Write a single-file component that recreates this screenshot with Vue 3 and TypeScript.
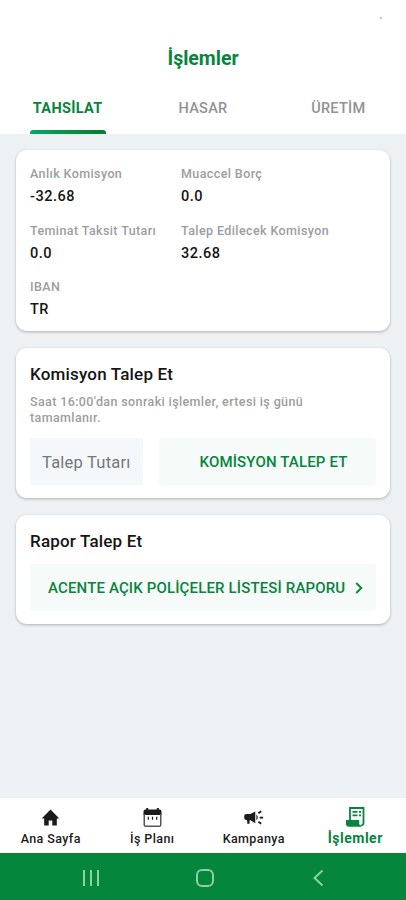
<script setup lang="ts">
import { ref } from 'vue'

interface Field {
  label: string
  value: string
}

const tabs: string[] = ['TAHSİLAT', 'HASAR', 'ÜRETİM']
const activeTab = ref<string>('TAHSİLAT')

const fields: Field[] = [
  { label: 'Anlık Komisyon', value: '-32.68' },
  { label: 'Muaccel Borç', value: '0.0' },
  { label: 'Teminat Taksit Tutarı', value: '0.0' },
  { label: 'Talep Edilecek Komisyon', value: '32.68' },
  { label: 'IBAN', value: 'TR' },
]
</script>

<template>
  <div class="screen">
    <header class="header">
      <span class="speck"></span>
      <h1 class="title">İşlemler</h1>
      <nav class="tabs">
        <button
          v-for="tab in tabs"
          :key="tab"
          class="tab"
          :class="{ active: tab === activeTab }"
          @click="activeTab = tab"
        >
          {{ tab }}
        </button>
      </nav>
    </header>

    <main class="content">
      <section class="card summary">
        <div v-for="field in fields" :key="field.label" class="field">
          <span class="label">{{ field.label }}</span>
          <span class="value">{{ field.value }}</span>
        </div>
      </section>

      <section class="card request">
        <h2 class="heading">Komisyon Talep Et</h2>
        <p class="note">Saat 16:00'dan sonraki işlemler, ertesi iş günü tamamlanır.</p>
        <div class="row">
          <div class="amount">Talep Tutarı</div>
          <button class="action">KOMİSYON TALEP ET</button>
        </div>
      </section>

      <section class="card report">
        <h2 class="heading">Rapor Talep Et</h2>
        <button class="action wide">
          <span>ACENTE AÇIK POLİÇELER LİSTESİ RAPORU</span>
          <svg class="chevron" viewBox="0 0 8 12"><path d="M1.3 1l5 5-5 5" /></svg>
        </button>
      </section>
    </main>

    <nav class="bottom">
      <a class="item">
        <svg class="icon" viewBox="0 0 21 21"><path d="M8.700 18.500v-5h3.600v5h4.500v-7h2.500L10.500 2.500 1.700 11.500h2.500v7z" /></svg>
        <span>Ana Sayfa</span>
      </a>
      <a class="item">
        <svg class="icon" viewBox="0 0 21 21">
          <path d="M1.500 8V4.500a2 2 0 0 1 2-2h.7V1h2v1.500h8.600V1h2v1.500h.7a2 2 0 0 1 2 2V8z" />
          <path class="frame" d="M2.250 7v10.700c0 1 .6 1.600 1.600 1.600h13.300c1 0 1.600-.6 1.600-1.600V7" />
          <path d="M5.700 9.700h1.200v3H5.700zm4.200 0h1.200v3H9.900zm4.200 0h1.200v3h-1.200z" />
        </svg>
        <span>İş Planı</span>
      </a>
      <a class="item">
        <svg class="icon" viewBox="0 0 24 24">
          <path d="M19 11v2h4v-2h-4zm-2 6.610l3.200 2.390 1.200-1.600-3.200-2.400zM21.400 5.600L20.200 4 17 6.400 18.200 8zM4 8c-1.400 0-2.600 1-2.600 2.300v2.400C1.400 14 2.500 15 4 15h.8v4h2.700v-4H8.500l5.500 3.500V5L8.500 8H4zm11.300 4c0 1.330 0 2.700 0 3.350.92-.81 1.500-2.010 1.500-3.340s-.58-2.530-1.500-3.350z" />
        </svg>
        <span>Kampanya</span>
      </a>
      <a class="item current">
        <svg class="icon" viewBox="0 0 21 21">
          <path class="outline" d="M5 14V2h13.500v15a2.300 2.300 0 0 1-2.300 2.300" />
          <path d="M1 14h13.200v3.500c0 1.300.8 2 2.300 2v1.300H4c-1.900 0-3-1.200-3-3z" />
          <path d="M7.500 5h5v1.700h-5zm6.500 0h2v1.700h-2zM7.500 8.500h5v1.700h-5zm6.500 0h2v1.700h-2z" />
        </svg>
        <span>İşlemler</span>
      </a>
    </nav>

    <footer class="system">
      <svg class="key" viewBox="0 0 20 20"><path d="M3 2v16M10 2v16M17 2v16" /></svg>
      <svg class="key" viewBox="0 0 20 20"><rect x="2" y="2" width="16" height="16" rx="5" /></svg>
      <svg class="key" viewBox="0 0 20 20"><path d="M13.500 2.500L5.500 10l8 7.500" /></svg>
    </footer>
  </div>
</template>

<style>
body {
  margin: 0;
}
</style>

<style scoped>
.screen {
  display: flex;
  flex-direction: column;
  width: 100%;
  height: 900px;
  overflow: hidden;
  background: #eef1f4;
  color: #151515;
  font-family: Roboto, sans-serif;
}
button {
  border: 0;
  padding: 0;
  background: none;
  font-family: inherit;
}
.header {
  position: relative;
  display: flex;
  flex-direction: column;
  height: 134px;
  background: #fff;
}
.speck {
  position: absolute;
  top: 17px;
  right: 24px;
  width: 2px;
  height: 2px;
  background: #c4c4c4;
}
.title {
  margin: 47px 0 0;
  color: #07843d;
  font-size: 19.5px;
  font-weight: 700;
  line-height: 24px;
  text-align: center;
}
.tabs {
  display: grid;
  grid-template-columns: repeat(3, 1fr);
  flex: 1;
  padding-top: 12px;
}
.tab {
  display: flex;
  flex-direction: column;
  align-items: center;
  justify-content: space-between;
  padding-top: 17px;
  color: #929292;
  font-size: 14.5px;
  font-weight: 500;
  line-height: 18px;
  letter-spacing: 0.3px;
}
.tab.active {
  color: #07843d;
  font-weight: 700;
}
.tab.active::after {
  content: '';
  width: 76px;
  height: 4px;
  border-radius: 3px 3px 0 0;
  background: linear-gradient(90deg, #09a665, #067d2c);
}
.content {
  display: flex;
  flex-direction: column;
  flex: 1;
  gap: 17px;
  padding: 16px 16px 0;
}
.card {
  box-sizing: border-box;
  padding: 0 14px;
  border-radius: 11px;
  background: #fff;
  box-shadow: 0 1px 3px rgba(0, 0, 0, 0.28);
}
.summary {
  display: grid;
  grid-template-columns: 151px 1fr;
  grid-auto-rows: 56.5px;
  height: 181px;
  padding-top: 15px;
}
.field {
  display: flex;
  flex-direction: column;
  gap: 5px;
}
.label,
.note {
  color: #9d9d9d;
  font-size: 12.5px;
  font-weight: 500;
  line-height: 18px;
  letter-spacing: 0.4px;
  white-space: nowrap;
}
.value {
  font-size: 14.5px;
  font-weight: 500;
  line-height: 18px;
  letter-spacing: 0.5px;
}
.request {
  height: 150px;
  padding-top: 15px;
}
.report {
  height: 109px;
  padding-top: 15px;
}
.heading {
  margin: 0;
  font-size: 17px;
  font-weight: 500;
  line-height: 22px;
  letter-spacing: 0.18px;
}
.note {
  margin: 9px 0 0;
  width: 290px;
  line-height: 16px;
  letter-spacing: 0.38px;
  white-space: normal;
}
.row {
  display: grid;
  grid-template-columns: 113px 1fr;
  gap: 16px;
  margin-top: 12px;
}
.amount {
  box-sizing: border-box;
  height: 47px;
  padding: 1px 0 0 12px;
  background: #f5f8fa;
  color: #73787b;
  font-size: 16.5px;
  line-height: 47px;
  letter-spacing: 0.22px;
}
.action {
  height: 47px;
  padding: 1px 0 0 12px;
  border-radius: 3px;
  background: #f6faf8;
  color: #07843d;
  font-size: 15px;
  font-weight: 500;
  letter-spacing: 0.15px;
}
.action.wide {
  display: flex;
  align-items: center;
  justify-content: space-between;
  width: 100%;
  margin-top: 12px;
  padding: 0 13px 0 18px;
}
.chevron {
  width: 8px;
  height: 12px;
  fill: none;
  stroke: #07843d;
  stroke-width: 1.9;
}
.bottom {
  display: grid;
  grid-template-columns: repeat(4, 1fr);
  height: 55px;
  background: #fff;
}
.item {
  display: flex;
  flex-direction: column;
  align-items: center;
  padding-top: 9px;
  color: #1b1b1b;
  font-size: 12.5px;
  font-weight: 500;
  line-height: 18px;
  letter-spacing: 0.4px;
}
.icon {
  width: 21px;
  height: 21px;
  margin-bottom: 2px;
  fill: currentColor;
}
.current {
  padding-top: 8px;
  color: #07843d;
  font-size: 14px;
  font-weight: 700;
  letter-spacing: 0.5px;
}
.current .icon {
  margin-bottom: 2px;
}
.outline {
  fill: none;
  stroke: currentColor;
  stroke-width: 1.8;
}
.frame {
  fill: none;
  stroke: #555;
  stroke-width: 1.5;
}
.system {
  display: flex;
  justify-content: center;
  align-items: center;
  gap: 94px;
  height: 47px;
  padding: 3px 0 0 4px;
  box-sizing: border-box;
  background: #04863d;
}
.key {
  width: 20px;
  height: 20px;
  fill: none;
  stroke: #8fd0a6;
  stroke-width: 2;
}
</style>
